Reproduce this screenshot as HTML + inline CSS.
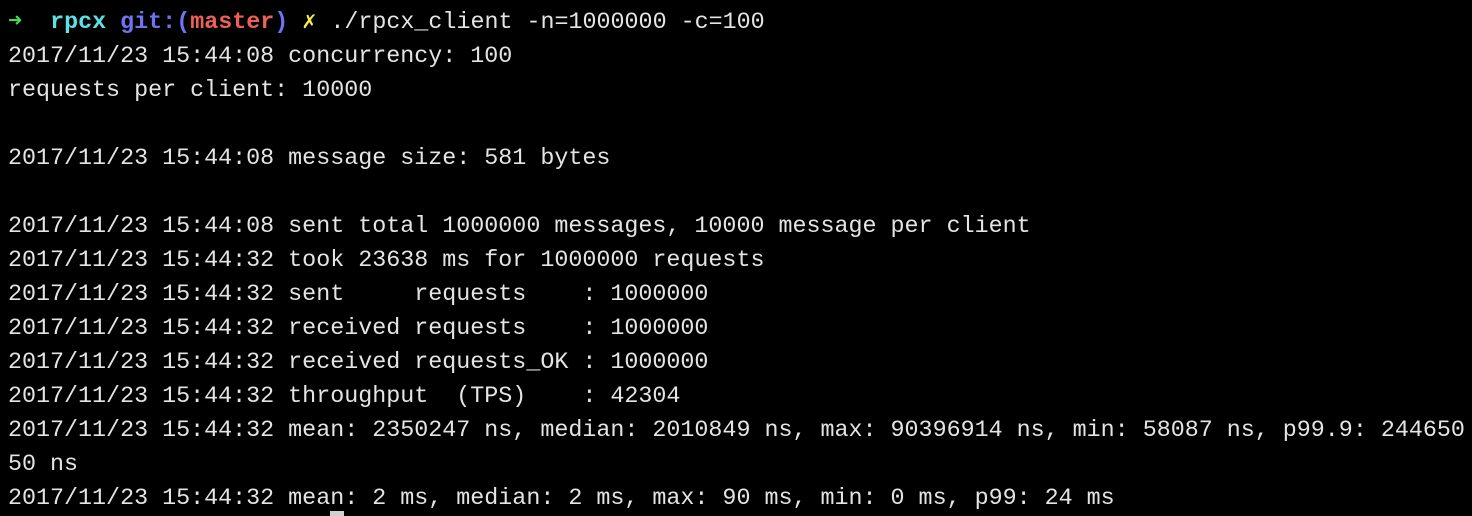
<html><head><style>
body{margin:0;background:#000;width:1472px;height:516px;overflow:hidden}
pre{margin:0;position:absolute;left:8px;top:3px;font-family:"Liberation Mono","DejaVu Sans Mono",monospace;font-size:23.35px;line-height:34px;color:#e4e4e4;letter-spacing:0}
b{font-weight:bold}
.g{color:#3fdc4f;font-family:"DejaVu Sans Mono",monospace}.c{color:#5ce1e6}.bl{color:#6e74f2}.r{color:#f0605a}.y{color:#f2ee4a}
.cur{position:absolute;left:330px;top:511px;width:14px;height:5px;background:#d0d0d0}
</style></head><body><pre><b class="g">➜</b>  <b class="c">rpcx</b> <b class="bl">git:(</b><b class="r">master</b><b class="bl">)</b> <b class="y">✗</b> ./rpcx_client -n=1000000 -c=100
2017/11/23 15:44:08 concurrency: 100
requests per client: 10000

2017/11/23 15:44:08 message size: 581 bytes

2017/11/23 15:44:08 sent total 1000000 messages, 10000 message per client
2017/11/23 15:44:32 took 23638 ms for 1000000 requests
2017/11/23 15:44:32 sent     requests    : 1000000
2017/11/23 15:44:32 received requests    : 1000000
2017/11/23 15:44:32 received requests_OK : 1000000
2017/11/23 15:44:32 throughput  (TPS)    : 42304
2017/11/23 15:44:32 mean: 2350247 ns, median: 2010849 ns, max: 90396914 ns, min: 58087 ns, p99.9: 244650
50 ns
2017/11/23 15:44:32 mean: 2 ms, median: 2 ms, max: 90 ms, min: 0 ms, p99: 24 ms
</pre><div class="cur"></div></body></html>
